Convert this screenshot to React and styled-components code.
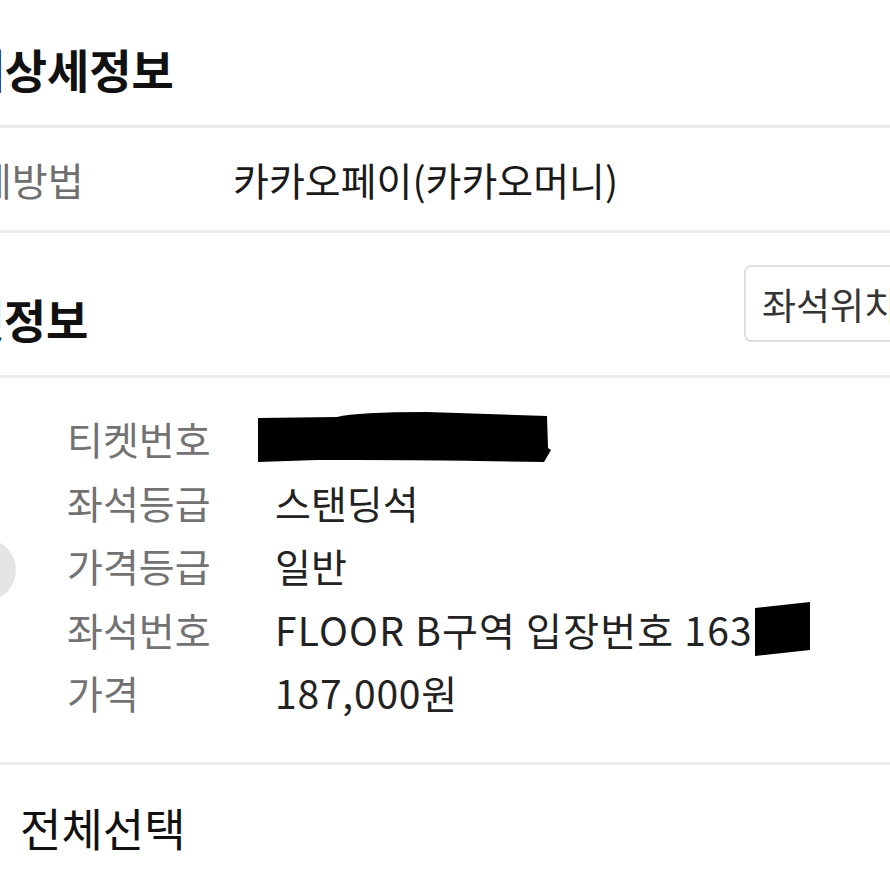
import React from 'react';
import styled, { createGlobalStyle } from 'styled-components';

const GlobalStyle = createGlobalStyle`
  html, body {
    margin: 0;
    padding: 0;
    background: #ffffff;
  }
  body {
    font-family: "Noto Sans CJK KR", "Noto Sans", sans-serif;
    color: #1a1a1a;
  }
`;

const Page = styled.div`
  width: 890px;
  height: 890px;
  overflow: hidden;
  background: #fff;
`;

const Content = styled.div`
  margin-left: -90px;
  width: 1110px;
`;

const Divider = styled.div`
  height: 3px;
  background: #ececec;
`;

const HeaderBlock = styled.div`
  display: flex;
  justify-content: space-between;
  align-items: flex-start;
  height: ${p => p.h}px;
  padding-left: ${p => p.indent}px;
  box-sizing: border-box;
`;

const Title = styled.h2`
  margin: 0;
  margin-top: ${p => p.top}px;
  font-size: 46px;
  font-weight: 700;
  line-height: 54px;
  color: #111;
  white-space: nowrap;
`;

const SeatButton = styled.button`
  margin-top: 32px;
  width: 276px;
  height: 77px;
  border: 2px solid #dedede;
  border-radius: 7px;
  background: #fff;
  text-align: left;
  padding: 0 0 0 16px;
  font-family: inherit;
  font-size: 37px;
  color: #333;
  white-space: nowrap;
  overflow: hidden;
`;

const PayRow = styled.div`
  display: grid;
  grid-template-columns: 293px 1fr;
  align-items: center;
  height: 102px;
  padding-left: 30px;
`;

const PayLabel = styled.span`
  font-size: 39px;
  color: #6f6f6f;
  white-space: nowrap;
`;

const PayValue = styled.span`
  font-size: 39px;
  color: #1a1a1a;
  white-space: nowrap;
`;

const TicketItem = styled.div`
  display: flex;
  align-items: center;
  height: 384px;
`;

const CheckCircle = styled.div`
  flex: none;
  width: 62px;
  height: 62px;
  border-radius: 50%;
  background: #e4e4e4;
  margin-left: 44px;
`;

const InfoGrid = styled.div`
  display: grid;
  grid-template-columns: 208px 1fr;
  grid-auto-rows: 63.5px;
  align-items: center;
  margin-left: 51px;
  margin-top: -10px;
`;

const InfoLabel = styled.span`
  font-size: 39px;
  color: #727272;
  white-space: nowrap;
`;

const InfoValue = styled.span`
  display: flex;
  align-items: center;
  font-size: 39px;
  color: #222;
  white-space: nowrap;
  letter-spacing: ${p => p.spacing || 0}px;
  margin-left: ${p => p.shift || 0}px;
`;

const Redact = styled.svg`
  display: block;
  flex: none;
`;

const SelectAll = styled.div`
  height: 125px;
  display: flex;
  align-items: center;
  padding-left: 110px;
  font-size: 45px;
  color: #111;
`;

const TicketNumberMark = () => (
  <Redact width="296" height="56" viewBox="0 0 296 56">
    <path d="M1 8 L80 7 Q100 2 170 2 L290 6 L291 38 L294 40 L287 52 L220 51 Q180 50 100 50 L60 50 L1 52 Z" fill="#000" />
  </Redact>
);

const SeatNumberMark = () => (
  <Redact width="58" height="54" viewBox="0 0 58 54">
    <path d="M2 6 L57 0 L57 48 L2 54 Z" fill="#000" />
  </Redact>
);

const rows = [
  { label: '티켓번호', value: <TicketNumberMark />, shift: -18 },
  { label: '좌석등급', value: '스탠딩석' },
  { label: '가격등급', value: '일반' },
  { label: '좌석번호', value: <>FLOOR B구역 입장번호 163<SeatNumberMark /></>, spacing: 1.2 },
  { label: '가격', value: '187,000원', spacing: 0.8 },
];

export default function App() {
  return (
    <Page>
      <GlobalStyle />
      <Content>
        <HeaderBlock h={125} indent={10}>
          <Title top={41}>결제상세정보</Title>
        </HeaderBlock>
        <Divider />
        <PayRow>
          <PayLabel>결제방법</PayLabel>
          <PayValue>카카오페이(카카오머니)</PayValue>
        </PayRow>
        <Divider />
        <HeaderBlock h={142} indent={9}>
          <Title top={58}>티켓정보</Title>
          <SeatButton>좌석위치 보기</SeatButton>
        </HeaderBlock>
        <Divider />
        <TicketItem>
          <CheckCircle />
          <InfoGrid>
            {rows.map(r => (
              <React.Fragment key={r.label}>
                <InfoLabel>{r.label}</InfoLabel>
                <InfoValue shift={r.shift} spacing={r.spacing}>{r.value}</InfoValue>
              </React.Fragment>
            ))}
          </InfoGrid>
        </TicketItem>
        <Divider />
        <SelectAll>전체선택</SelectAll>
      </Content>
    </Page>
  );
}
